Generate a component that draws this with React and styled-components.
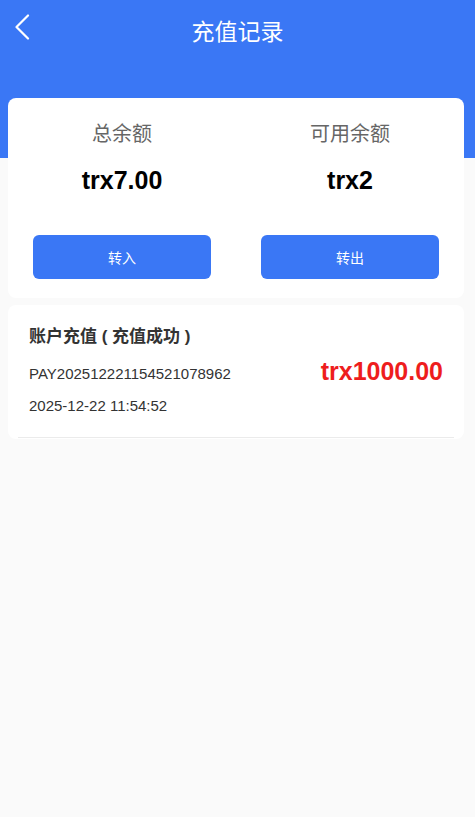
import React from 'react'
import styled, { createGlobalStyle } from 'styled-components'

const GlobalStyle = createGlobalStyle`
  * { box-sizing: border-box; }
  body {
    margin: 0;
    background: #fafafa;
    font-family: "Liberation Sans", "Noto Sans CJK SC", sans-serif;
  }
`

const records = [
  { title: '账户充值 ( 充值成功 )', order: 'PAY202512221154521078962', amount: 'trx1000.00', time: '2025-12-22 11:54:52' },
]

const BackIcon = () => (
  <svg width="16" height="26" viewBox="0 0 16 26" fill="none">
    <path d="M14 1.5 L2.5 13 L14 24.5" stroke="#fff" strokeWidth="2.2" strokeLinecap="round" strokeLinejoin="round" />
  </svg>
)

const App = () => {
  return (
    <Page>
      <GlobalStyle />
      <Header>
        <TitleBar>
          <BackBtn><BackIcon /></BackBtn>
          <Title>充值记录</Title>
        </TitleBar>
      </Header>

      <BalanceCard>
        <Col>
          <Label>总余额</Label>
          <Value>trx7.00</Value>
          <ActionButton>转入</ActionButton>
        </Col>
        <Col>
          <Label>可用余额</Label>
          <Value>trx2</Value>
          <ActionButton>转出</ActionButton>
        </Col>
      </BalanceCard>

      <ListCard>
        {records.map((r, i) => (
          <Item key={i}>
            <ItemTitle>{r.title}</ItemTitle>
            <Row>
              <Order>{r.order}</Order>
              <Amount>{r.amount}</Amount>
            </Row>
            <Time>{r.time}</Time>
          </Item>
        ))}
      </ListCard>
    </Page>
  )
}

const Page = styled.div`
  min-height: 817px;
  background: #fafafa;
`

const Header = styled.div`
  height: 158px;
  background: #3a77f5;
`

const TitleBar = styled.div`
  position: relative;
  height: 60px;
  display: flex;
  align-items: center;
  justify-content: center;
`

const BackBtn = styled.div`
  position: absolute;
  left: 14px;
  top: 14px;
  display: flex;
`

const Title = styled.h1`
  margin: 0;
  color: #fff;
  font-size: 23px;
  font-weight: 400;
`

const BalanceCard = styled.div`
  margin: -60px 11px 0 8px;
  background: #fff;
  border-radius: 8px;
  padding: 22px 0 19px;
  display: grid;
  grid-template-columns: 1fr 1fr;
`

const Col = styled.div`
  display: flex;
  flex-direction: column;
  align-items: center;
  padding: 0 25px;
`

const Label = styled.div`
  font-size: 20px;
  line-height: 28px;
  color: #666;
`

const Value = styled.div`
  margin-top: 16px;
  font-size: 25px;
  line-height: 32px;
  font-weight: 700;
  color: #000;
`

const ActionButton = styled.button`
  margin-top: 39px;
  width: 100%;
  height: 44px;
  border: none;
  border-radius: 6px;
  background: #3a77f5;
  color: #fff;
  font-family: inherit;
  font-size: 14px;
`

const ListCard = styled.div`
  margin: 7px 11px 0 8px;
  background: #fff;
  border-radius: 8px;
  padding-bottom: 1px;
`

const Item = styled.div`
  margin: 0 10px;
  padding: 20px 11px 21px;
  border-bottom: 1px solid #ebebeb;
`

const ItemTitle = styled.div`
  font-size: 17px;
  line-height: 24px;
  font-weight: 700;
  color: #333;
`

const Row = styled.div`
  margin-top: 8px;
  height: 32px;
  display: flex;
  align-items: center;
  justify-content: space-between;
`

const Order = styled.div`
  font-size: 15px;
  color: #333;
`

const Amount = styled.div`
  font-size: 25px;
  font-weight: 700;
  color: #ee1d1d;
  margin-top: -4px;
`

const Time = styled.div`
  margin-top: 7px;
  font-size: 15px;
  line-height: 20px;
  color: #333;
`

export default App
